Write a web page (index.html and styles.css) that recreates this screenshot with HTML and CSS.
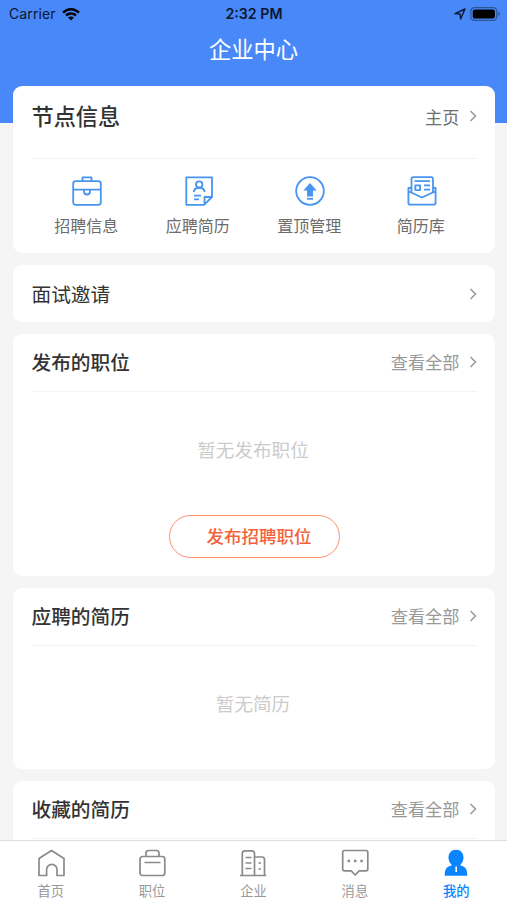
FILE: index.html
```html
<!DOCTYPE html>
<html lang="zh-CN">
<head>
  <meta charset="UTF-8">
  <meta name="viewport" content="width=device-width, initial-scale=1.0">
  <title>企业中心</title>
  <link rel="stylesheet" href="styles.css">
</head>
<body>
  <header class="header">
    <div class="status-bar">
      <div class="carrier">
        <span>Carrier</span>
        <svg width="18" height="14" viewBox="0 0 18 14">
          <path d="M0.2 4.7C5.2-.4 12.8-.4 17.8 4.7L16 6.5C12 2.6 6 2.6 2 6.5Z"/>
          <path d="M3.2 7.7C6.5 4.5 11.5 4.5 14.8 7.7L13 9.5C10.7 7.3 7.3 7.3 5 9.5Z"/>
          <path d="M6.1 10.6C7.7 9 10.3 9 11.9 10.6L9 13.5Z"/>
        </svg>
      </div>
      <span class="time">2:32 PM</span>
      <div class="battery">
        <svg width="12" height="12" viewBox="0 0 12 12">
          <path d="M1 5.6L11 1L6.6 11L6 6Z" fill="none" stroke="#0b1730" stroke-width="1.4" stroke-linejoin="round"/>
        </svg>
        <svg width="31" height="14" viewBox="0 0 31 14">
          <rect x=".8" y=".7" width="26" height="12.6" rx="3.6" fill="none" stroke="#2c5597" stroke-width="1.2"/>
          <rect x="2.7" y="2.6" width="22.2" height="8.8" rx="2"/>
          <path d="M28.3 4.8C30.2 5.5 30.2 8.5 28.3 9.2Z" fill="#2c5597"/>
        </svg>
      </div>
    </div>
    <h1>企业中心</h1>
  </header>

  <main class="content">
    <section class="card node">
      <div class="card-head">
        <h2>节点信息</h2>
        <a class="more home">主页 <svg class="arrow" viewBox="0 0 8 12"><path d="M1.5 1L6.5 6L1.5 11"/></svg></a>
      </div>
      <ul class="menu">
        <li>
          <svg class="menu-icon" viewBox="0 0 30 30">
            <rect x="1.2" y="5.2" width="27.6" height="23.6" rx="2.5"/>
            <path d="M10.5 5V1.3H19.5V5M1.2 13.6H28.8M12 13.6V15.5A3 3 0 0 0 18 15.5V13.6"/>
          </svg>
          <span>招聘信息</span>
        </li>
        <li>
          <svg class="menu-icon" viewBox="0 0 30 30">
            <path d="M28 21V1.3H2.3V28.8H20L28 21H20.5V28.5"/>
            <circle cx="15.2" cy="8.5" r="3.2"/>
            <path d="M9.8 16C10.3 10.3 20.1 10.3 20.6 16M10 19.6H17M10 23.4H15"/>
          </svg>
          <span>应聘简历</span>
        </li>
        <li>
          <svg class="menu-icon" viewBox="0 0 30 30">
            <circle cx="15" cy="15" r="13.8"/>
            <path class="solid" d="M15 7L21.7 14.4H18V20.6H12V14.4H8.3Z"/>
            <path d="M12 22.8H18"/>
          </svg>
          <span>置顶管理</span>
        </li>
        <li>
          <svg class="menu-icon" viewBox="0 0 30 30">
            <path d="M4.5 16.5V3Q4.5 1.2 6.3 1.2H24.2Q26 1.2 26 3V16.5"/>
            <path d="M4.5 12H1.4V26.8Q1.4 28.7 3.3 28.7H26.7Q28.6 28.7 28.6 26.8V12H26M1.4 15.3L15 21.5L28.6 15.3"/>
            <path d="M7.5 5.2H23M17 9.3H23M17 13.6H23"/>
            <rect x="8.3" y="9.3" width="4.8" height="4.8"/>
          </svg>
          <span>简历库</span>
        </li>
      </ul>
    </section>

    <section class="card invite">
      <h3 class="normal">面试邀请</h3>
      <svg class="arrow" viewBox="0 0 8 12"><path d="M1.5 1L6.5 6L1.5 11"/></svg>
    </section>

    <section class="card posts">
      <div class="card-head">
        <h3>发布的职位</h3>
        <a class="more">查看全部 <svg class="arrow" viewBox="0 0 8 12"><path d="M1.5 1L6.5 6L1.5 11"/></svg></a>
      </div>
      <p class="empty">暂无发布职位</p>
      <button type="button" class="publish">发布招聘职位</button>
    </section>

    <section class="card resumes">
      <div class="card-head">
        <h3>应聘的简历</h3>
        <a class="more">查看全部 <svg class="arrow" viewBox="0 0 8 12"><path d="M1.5 1L6.5 6L1.5 11"/></svg></a>
      </div>
      <p class="empty">暂无简历</p>
    </section>

    <section class="card saved">
      <div class="card-head">
        <h3>收藏的简历</h3>
        <a class="more">查看全部 <svg class="arrow" viewBox="0 0 8 12"><path d="M1.5 1L6.5 6L1.5 11"/></svg></a>
      </div>
    </section>
  </main>

  <nav class="tabbar">
    <a class="tab">
      <svg viewBox="0 0 28 28"><path d="M2 26.5V9.5L14.5 1.5L27 9.5V26.5H20V20.5A5.2 5.2 0 0 0 9.6 20.5V26.5Z"/></svg>
      <span>首页</span>
    </a>
    <a class="tab">
      <svg viewBox="0 0 28 28"><rect x="2" y="7.5" width="24.8" height="19" rx="2.5"/><path d="M8 7.5V4Q8 1.5 10.5 1.5H18.5Q21 1.5 21 4V7.5M6.5 13.5H22.5"/></svg>
      <span>职位</span>
    </a>
    <a class="tab">
      <svg viewBox="0 0 28 28"><path d="M1 26.5H27.2M3.3 26.5V4.5Q3.3 1.8 6 1.8H12.8Q15.5 1.8 15.5 4.5V26.5M15.5 8H23Q25.5 8 25.5 10.5V26.5M6.5 8.5H12.5M6.5 14H12.5M6.5 19.5H12.5M19.5 14H22M19.5 20H22"/></svg>
      <span>企业</span>
    </a>
    <a class="tab">
      <svg viewBox="0 0 28 28"><path d="M3.5 1.5H25Q26.8 1.5 26.8 3.3V20Q26.8 21.8 25 21.8H18.2L14.2 26L10.2 21.8H3.5Q1.7 21.8 1.7 20V3.3Q1.7 1.5 3.5 1.5Z"/><path d="M6.6 12H9M13 12H15.4M19.4 12H21.8" stroke-width="2.6"/></svg>
      <span>消息</span>
    </a>
    <a class="tab active">
      <svg viewBox="0 0 28 28"><path fill-rule="evenodd" d="M14 .8C18.8 .8 21.5 4.2 21.5 8.5C21.5 12 20.2 14 18.5 15.5V16.5C23 17.5 25.2 20 25.2 25V26.8H2.8V25C2.8 20 5 17.5 9.5 16.5V15.5C7.8 14 6.5 12 6.5 8.5C6.5 4.2 9.2 .8 14 .8ZM13.4 17.5V23H15V17.5Z"/></svg>
      <span>我的</span>
    </a>
  </nav>
</body>
</html>
```

FILE: styles.css
```css
* {
  box-sizing: border-box;
}
body {
  margin: 0;
  height: 900px;
  overflow: hidden;
  display: flex;
  flex-direction: column;
  background: #f5f5f5;
  color: #333;
  font-family: "Noto Sans CJK SC", sans-serif;
}
h1, h2, h3, p, ul {
  margin: 0;
  padding: 0;
}
.header {
  height: 123px;
  flex: none;
  background: #4988f8;
}
.status-bar {
  height: 27px;
  padding: 0 6px 0 9px;
  display: grid;
  grid-template-columns: 1fr auto 1fr;
  align-items: center;
  font-family: Inter, sans-serif;
  font-size: 14px;
  color: #0b1730;
}
.carrier, .battery {
  display: flex;
  align-items: center;
  gap: 6px;
}
.carrier {
  letter-spacing: 0.1px;
}
.battery {
  justify-content: flex-end;
  gap: 4px;
}
.time {
  font-size: 14.2px;
  font-weight: 600;
  margin-left: -2px;
}
h1 {
  color: white;
  font-size: 22.3px;
  font-weight: 400;
  line-height: 42px;
  text-align: center;
}
.content {
  flex: 1;
  min-height: 0;
  margin-top: -37px;
  padding: 0 12px 0 13px;
  display: flex;
  flex-direction: column;
  gap: 12px;
}
.card {
  flex: none;
  background: white;
  border-radius: 9px;
  padding: 0 18.5px;
}
.card-head {
  height: 58px;
  padding-bottom: 2px;
  display: flex;
  justify-content: space-between;
  align-items: center;
  border-bottom: 1px solid #f3f3f3;
}
h2 {
  font-size: 22.2px;
  font-weight: 500;
  padding-bottom: 2px;
}
h3 {
  font-size: 19.7px;
  font-weight: 500;
}
.normal {
  font-weight: 400;
  padding-bottom: 1px;
}
.more {
  display: flex;
  align-items: center;
  gap: 9px;
  font-size: 17.2px;
  color: #999;
}
.home {
  color: #707070;
}
.arrow {
  width: 8px;
  height: 12px;
  fill: none;
  stroke: #999;
  stroke-width: 1.5;
}
.node {
  height: 167px;
}
.node .card-head {
  height: 73px;
  padding-bottom: 12px;
}
.menu {
  display: grid;
  grid-template-columns: repeat(4, 1fr);
  list-style: none;
  margin-left: -1px;
  padding-top: 17px;
}
.menu li {
  display: flex;
  flex-direction: column;
  align-items: center;
  gap: 7px;
  font-size: 16px;
  line-height: 24px;
  color: #6c6c6c;
}
.menu-icon {
  width: 30px;
  height: 30px;
  margin-left: 2px;
  fill: none;
  stroke: #4795ee;
  stroke-width: 1.8;
  stroke-linejoin: round;
}
.menu-icon .solid {
  fill: #4795ee;
  stroke: none;
}
.invite {
  height: 57px;
  display: flex;
  justify-content: space-between;
  align-items: center;
}
.posts {
  height: 242px;
}
.resumes {
  height: 181px;
}
.saved {
  height: 120px;
}
.empty {
  margin-right: 2px;
  padding-top: 42px;
  font-size: 18.6px;
  line-height: 30px;
  text-align: center;
  color: #ccc;
}
.publish {
  display: block;
  width: 171px;
  height: 43px;
  margin: 51px auto 0;
  padding: 0 0 2px 10px;
  background: white;
  border: 1px solid #ff8e6d;
  border-radius: 22px;
  color: #f4623a;
  font-family: inherit;
  font-size: 17.5px;
  font-weight: 500;
}
.tabbar {
  flex: none;
  height: 60px;
  display: grid;
  grid-template-columns: repeat(5, 1fr);
  background: white;
  border-top: 1px solid #ddd;
  z-index: 1;
}
.tab {
  display: flex;
  flex-direction: column;
  align-items: center;
  padding-top: 8px;
  gap: 4px;
  font-size: 13.3px;
  line-height: 20px;
  color: #999;
}
.tab svg {
  width: 28px;
  height: 28px;
  fill: none;
  stroke: #8a8a8a;
  stroke-width: 1.7;
  stroke-linejoin: round;
}
.tab.active {
  color: #0a84ff;
  font-weight: 500;
}
.tab.active svg {
  fill: #0a84ff;
  stroke: none;
}
```
